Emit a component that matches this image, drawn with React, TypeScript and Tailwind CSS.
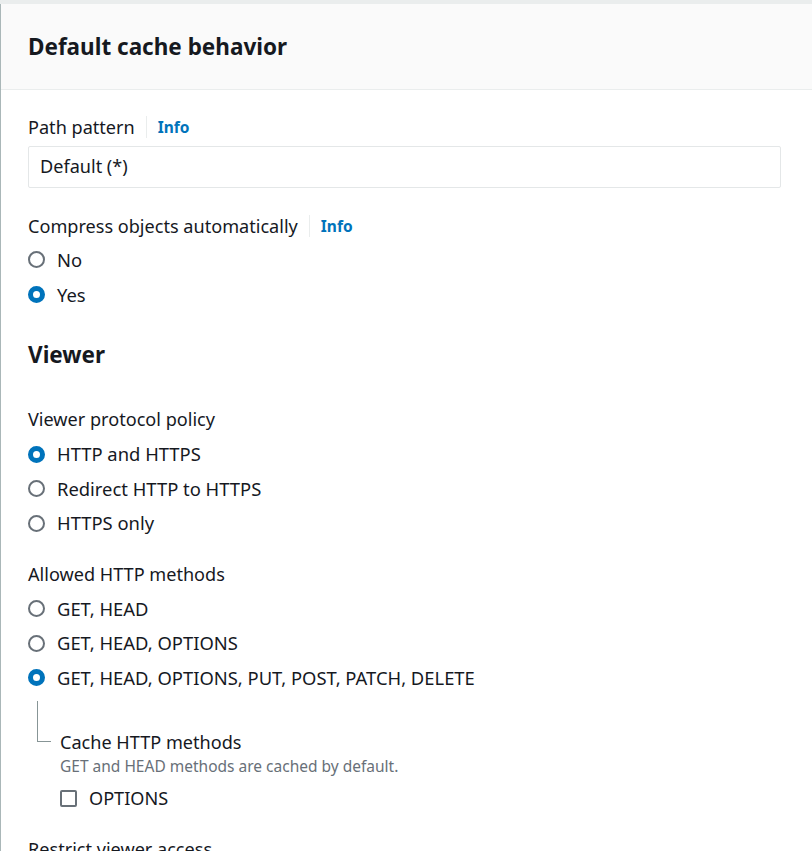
import React from "react";

const font = { fontFamily: '"Noto Sans", "Open Sans", Arial, sans-serif' };

function Radio({ checked, label, tall }: { checked?: boolean; label: string; tall?: boolean }) {
  return (
    <div className={tall ? "flex h-[35px] items-center" : "flex h-[34.5px] items-center"}>
      <span
        className={
          checked
            ? "box-border h-[17px] w-[17px] shrink-0 rounded-full border-[5px] border-[#0073bb] bg-white"
            : "box-border h-[17px] w-[17px] shrink-0 rounded-full border-2 border-[#687078] bg-white"
        }
      />
      <span className="ml-[12px] text-[18.4px] leading-[22px] text-[#16191f]">{label}</span>
    </div>
  );
}

function Label({ text, info }: { text: string; info?: boolean }) {
  return (
    <div className="flex h-[22px] items-center text-[18.1px] leading-[22px] text-[#16191f]">
      <span>{text}</span>
      {info && (
        <>
          <span className="mx-[11px] h-[22px] w-px bg-[#eaeded]" />
          <span className="text-[15.5px] font-bold text-[#0073bb]">Info</span>
        </>
      )}
    </div>
  );
}

export default function App() {
  return (
    <div className="min-h-screen overflow-hidden bg-white" style={font}>
      <div className="h-[4px] bg-[#eaeded]" />
      <div className="min-h-[847px] border-l border-[#aab7b8]">
        <div className="flex h-[86px] items-center border-b border-[#eaeded] bg-[#fafafa] px-[27px]">
          <h2 className="text-[22.5px] font-bold leading-[30px] text-[#16191f]">Default cache behavior</h2>
        </div>
        <div className="pl-[27px] pr-[31px]">
          <div className="mt-[26px]">
            <Label text="Path pattern" info />
          </div>
          <div className="mt-[8px] flex h-[42px] items-center rounded-[2px] border border-[#e4e7e8] px-[11px] text-[18.1px] text-[#16191f]">
            Default (*)
          </div>
          <div className="mt-[27px]">
            <Label text="Compress objects automatically" info />
          </div>
          <div className="mt-[5px]">
            <Radio label="No" tall />
            <Radio label="Yes" checked tall />
          </div>
          <h3 className="mt-[28px] text-[22.5px] font-bold leading-[30px] text-[#16191f]">Viewer</h3>
          <div className="mt-[38px]">
            <Label text="Viewer protocol policy" />
          </div>
          <div className="mt-[7px]">
            <Radio label="HTTP and HTTPS" checked />
            <Radio label="Redirect HTTP to HTTPS" />
            <Radio label="HTTPS only" />
          </div>
          <div className="mt-[22px]">
            <Label text="Allowed HTTP methods" />
          </div>
          <div className="mt-[7px]">
            <Radio label="GET, HEAD" />
            <Radio label="GET, HEAD, OPTIONS" />
            <Radio label="GET, HEAD, OPTIONS, PUT, POST, PATCH, DELETE" checked />
          </div>
          <div className="flex">
            <div className="w-[32px] shrink-0">
              <div className="ml-[9px] mt-[6px] h-[41px] w-[14px] border-b border-l border-[#879596]" />
            </div>
            <div className="mt-[36px]">
              <div className="text-[18.1px] leading-[22px] text-[#16191f]">Cache HTTP methods</div>
              <div className="mt-[3px] text-[15.5px] leading-[20px] text-[#687078]">
                GET and HEAD methods are cached by default.
              </div>
              <div className="mt-[9px] flex h-[26px] items-center">
                <span className="box-border h-[17px] w-[17px] rounded-[2px] border-2 border-[#687078] bg-white" />
                <span className="ml-[12px] text-[18.1px] leading-[22px] text-[#16191f]">OPTIONS</span>
              </div>
            </div>
          </div>
          <div className="mt-[27px]">
            <Label text="Restrict viewer access" />
          </div>
        </div>
      </div>
    </div>
  );
}
